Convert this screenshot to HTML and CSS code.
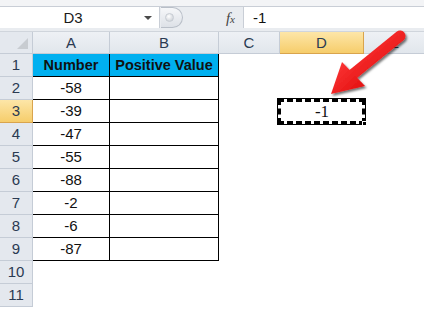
FILE: index.html
```html
<!DOCTYPE html>
<html lang="en">

<head>
    <meta charset="UTF-8">
    <title>Positive Value</title>
    <link rel="stylesheet" href="styles.css">
</head>

<body>
    <div class="window">
        <div class="ribbon-edge"></div>

        <div class="formula-bar">
            <div class="name-box">
                <span class="name">D3</span>
                <span class="drop"></span>
            </div>
            <div class="splitter"><span class="knob"></span></div>
            <div class="fx"><i>f</i><span>x</span></div>
            <div class="formula-input">-1</div>
        </div>

        <div class="sheet">
            <div class="corner"></div>
            <div class="col-head">A</div>
            <div class="col-head">B</div>
            <div class="col-head">C</div>
            <div class="col-head active">D</div>
            <div class="col-head last">E</div>

            <div class="row-head">1</div>
            <div class="cell title">Number</div>
            <div class="cell title">Positive Value</div>
            <div class="cell empty"></div>
            <div class="cell empty"></div>
            <div class="cell empty"></div>

            <div class="row-head">2</div>
            <div class="cell num">-58</div>
            <div class="cell num"></div>
            <div class="cell empty"></div>
            <div class="cell empty"></div>
            <div class="cell empty"></div>

            <div class="row-head active">3</div>
            <div class="cell num">-39</div>
            <div class="cell num"></div>
            <div class="cell empty"></div>
            <div class="cell empty copied">-1<span class="ants"></span><span class="handle"></span></div>
            <div class="cell empty"></div>

            <div class="row-head">4</div>
            <div class="cell num">-47</div>
            <div class="cell num"></div>
            <div class="cell empty"></div>
            <div class="cell empty"></div>
            <div class="cell empty"></div>

            <div class="row-head">5</div>
            <div class="cell num">-55</div>
            <div class="cell num"></div>
            <div class="cell empty"></div>
            <div class="cell empty"></div>
            <div class="cell empty"></div>

            <div class="row-head">6</div>
            <div class="cell num">-88</div>
            <div class="cell num"></div>
            <div class="cell empty"></div>
            <div class="cell empty"></div>
            <div class="cell empty"></div>

            <div class="row-head">7</div>
            <div class="cell num">-2</div>
            <div class="cell num"></div>
            <div class="cell empty"></div>
            <div class="cell empty"></div>
            <div class="cell empty"></div>

            <div class="row-head">8</div>
            <div class="cell num">-6</div>
            <div class="cell num"></div>
            <div class="cell empty"></div>
            <div class="cell empty"></div>
            <div class="cell empty"></div>

            <div class="row-head">9</div>
            <div class="cell num">-87</div>
            <div class="cell num"></div>
            <div class="cell empty"></div>
            <div class="cell empty"></div>
            <div class="cell empty"></div>

            <div class="row-head">10</div>
            <div class="cell empty"></div>
            <div class="cell empty"></div>
            <div class="cell empty"></div>
            <div class="cell empty"></div>
            <div class="cell empty"></div>

            <div class="row-head">11</div>
            <div class="cell empty"></div>
            <div class="cell empty"></div>
            <div class="cell empty"></div>
            <div class="cell empty"></div>
            <div class="cell empty"></div>
        </div>

        <svg class="arrow" width="424" height="309" viewBox="0 0 424 309">
            <defs>
                <filter id="shadow" x="-20%" y="-20%" width="140%" height="140%">
                    <feDropShadow dx="1.5" dy="2" stdDeviation="1.2" flood-color="#000" flood-opacity="0.55" />
                </filter>
                <linearGradient id="red" x1="0" y1="0" x2="1" y2="1">
                    <stop offset="0" stop-color="#ff3b3b" />
                    <stop offset="1" stop-color="#e00b0b" />
                </linearGradient>
            </defs>
            <g filter="url(#shadow)">
                <line x1="400" y1="36" x2="352" y2="75" stroke="url(#red)" stroke-width="11" stroke-linecap="round" />
                <polygon points="331,94 342,62 365,86" fill="url(#red)" />
            </g>
        </svg>
    </div>
</body>

</html>
```

FILE: styles.css
```css
* {
    margin: 0;
    padding: 0;
    box-sizing: border-box;
}

body {
    width: 424px;
    height: 309px;
    overflow: hidden;
    background: #fff;
    font-family: "Liberation Sans", Arial, sans-serif;
}

.window {
    position: relative;
    width: 424px;
    height: 309px;
}

.ribbon-edge {
    height: 7px;
    background: #f3f4f6;
    border-bottom: 1px solid #c9ced6;
}

.formula-bar {
    display: flex;
    height: 25px;
    padding-bottom: 3px;
    background: #e9ecf0;
    border-bottom: 1px solid #d0d5dc;
}

.name-box {
    width: 160px;
    display: flex;
    align-items: center;
    background: #fff;
    border-right: 1px solid #c9ced6;
    position: relative;
}

.name {
    flex: 1;
    text-align: center;
    font-size: 15px;
    color: #1a1a1a;
    padding-left: 2px;
}

.drop {
    width: 0;
    height: 0;
    margin-right: 7px;
    border-left: 4px solid transparent;
    border-right: 4px solid transparent;
    border-top: 4px solid #4a4a4a;
}

.splitter {
    width: 22px;
    height: 21px;
    margin-left: 1px;
    border-radius: 0 11px 11px 0;
    border: 1px solid #b9bfc8;
    border-left: none;
    background: linear-gradient(#f6f7f9, #dde1e7);
    display: flex;
    align-items: center;
    padding-left: 4px;
}

.knob {
    width: 9px;
    height: 9px;
    border-radius: 50%;
    background: radial-gradient(circle at 40% 35%, #ffffff, #c3c8cf);
    border: 1px solid #c7ccd3;
}

.fx {
    width: 61px;
    text-align: right;
    padding-right: 8px;
    font-family: "Liberation Serif", serif;
    font-size: 15px;
    color: #444;
    line-height: 22px;
    border-right: 1px solid #c9ced6;
}

.fx span {
    font-size: 11px;
    font-style: italic;
}

.formula-input {
    flex: 1;
    background: #fff;
    padding-left: 9px;
    font-size: 15px;
    line-height: 22px;
    color: #111;
}

.sheet {
    display: grid;
    grid-template-columns: 33px 77px 109px 61px 84px 60px;
    grid-template-rows: 22px repeat(11, 23px);
}

.corner {
    background: #e4e8ee;
    border-right: 1px solid #c5ccd6;
    border-bottom: 1px solid #c5ccd6;
    position: relative;
}

.corner::after {
    content: "";
    position: absolute;
    right: 4px;
    bottom: 4px;
    border-left: 11px solid transparent;
    border-bottom: 11px solid #c8ccd1;
}

.col-head {
    background: linear-gradient(#eef1f5, #e1e6ec);
    border-right: 1px solid #c5ccd6;
    border-bottom: 1px solid #c5ccd6;
    text-align: center;
    font-size: 15px;
    line-height: 21px;
    color: #2a3a52;
}

.col-head.last {
    border-right: none;
}

.col-head.active,
.row-head.active {
    background: linear-gradient(#fde6a8, #f6cd6b);
    border-right: 1px solid #d9a44d;
    border-bottom: 1px solid #d9a44d;
}

.row-head {
    background: #e4e8ee;
    border-right: 1px solid #c5ccd6;
    border-bottom: 1px solid #c5ccd6;
    text-align: center;
    font-size: 15px;
    line-height: 22px;
    color: #2a3a52;
}

.cell {
    font-size: 15px;
    line-height: 22px;
    text-align: center;
    color: #111;
}

.title,
.num {
    border-right: 1px solid #000;
    border-bottom: 1px solid #000;
}

.title {
    background: #00b0f0;
    font-weight: bold;
    font-size: 14.5px;
}

.copied {
    position: relative;
    font-family: "Liberation Serif", serif;
    font-size: 17px;
    line-height: 23px;
}

.ants {
    position: absolute;
    top: -1px;
    left: -2px;
    right: -1px;
    bottom: -1px;
    border: 3px dashed #000;
    outline: 1px solid #000;
}

.handle {
    position: absolute;
    right: -3px;
    bottom: -3px;
    width: 5px;
    height: 5px;
    background: #000;
    border: 1px solid #fff;
}

.arrow {
    position: absolute;
    left: 0;
    top: 0;
    pointer-events: none;
}
```
